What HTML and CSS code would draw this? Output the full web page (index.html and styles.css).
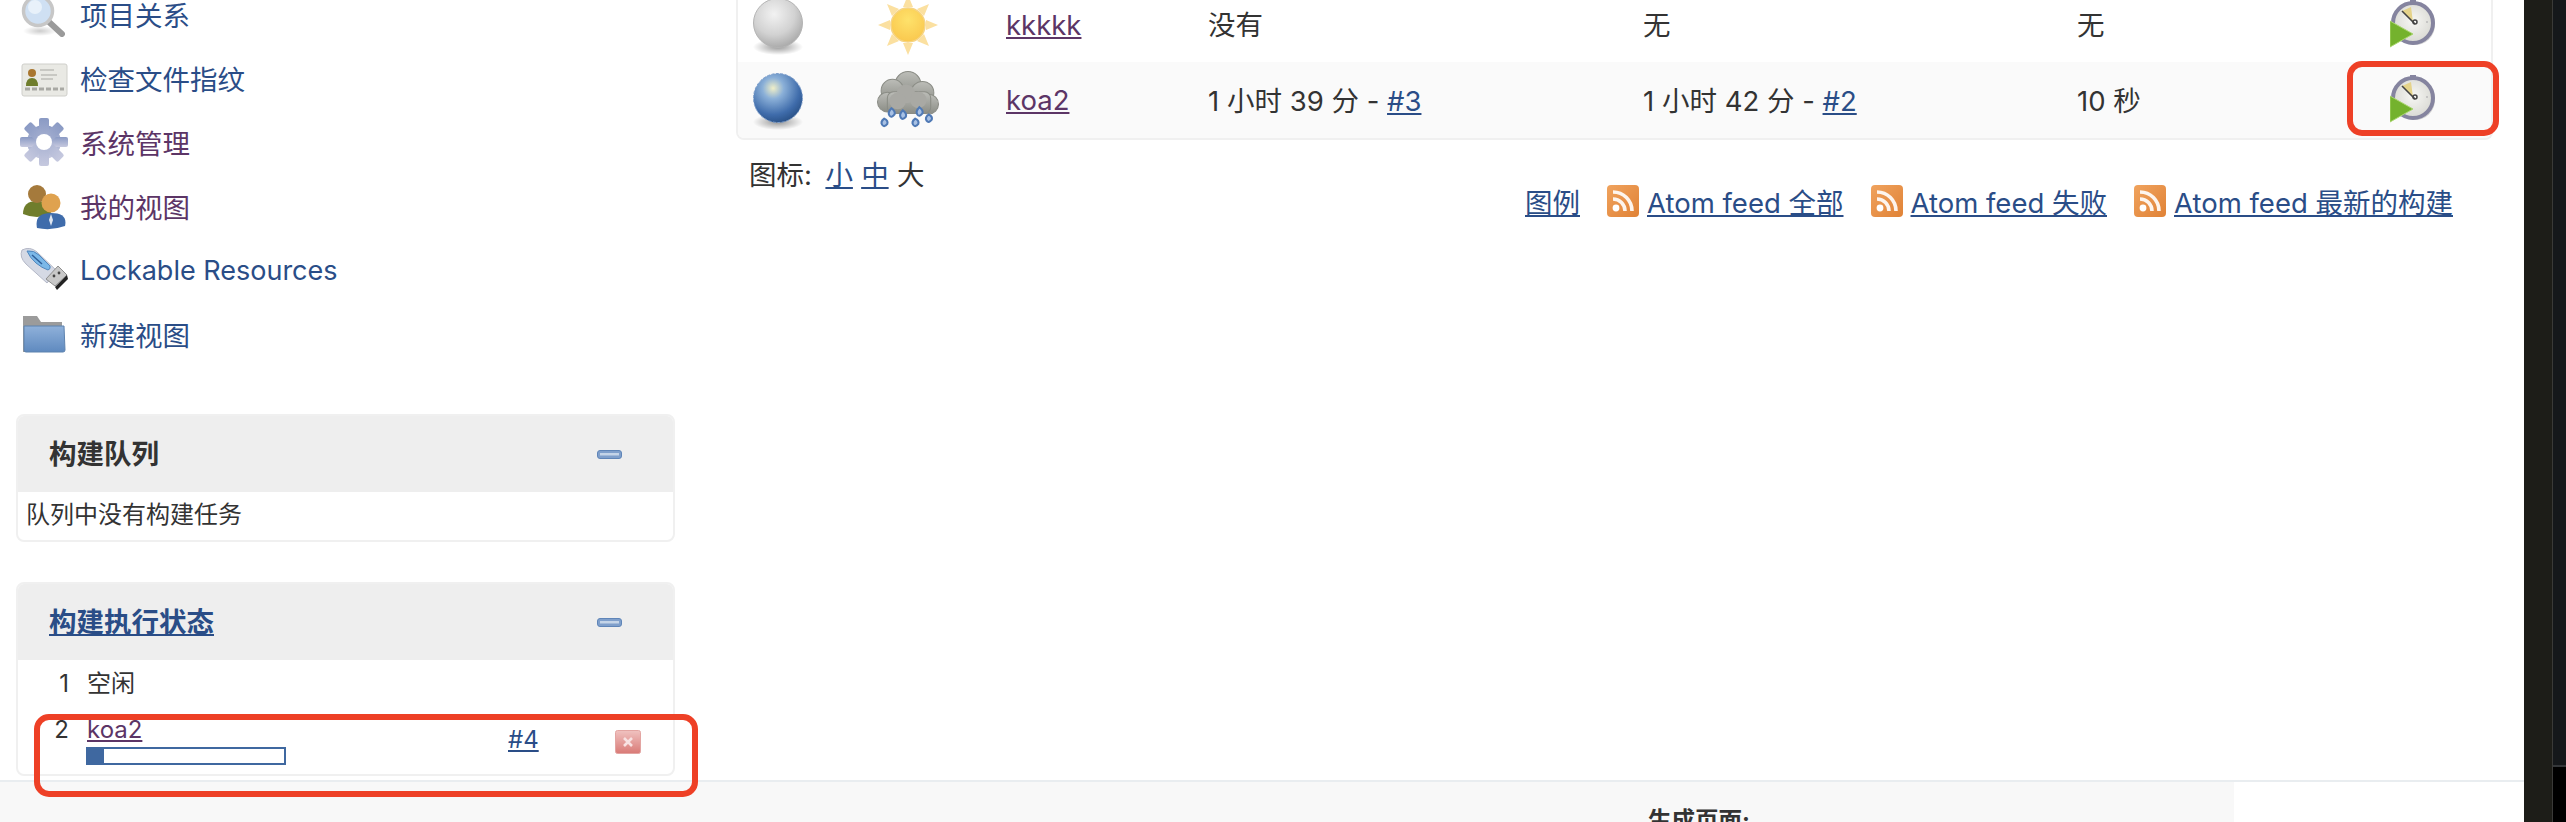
FILE: index.html
```html
<!DOCTYPE html>
<html lang="zh-CN">
<head>
<meta charset="utf-8">
<title>Jenkins</title>
<link rel="stylesheet" href="styles.css">
</head>
<body>
<svg class="defs" width="0" height="0" aria-hidden="true">
  <defs>
    <radialGradient id="gGray" cx="42%" cy="32%" r="70%"><stop offset="0" stop-color="#f2f2f2"/><stop offset=".6" stop-color="#d2d2d2"/><stop offset="1" stop-color="#a9a9a9"/></radialGradient>
    <radialGradient id="gBlue" cx="40%" cy="30%" r="72%"><stop offset="0" stop-color="#f0efc8"/><stop offset=".3" stop-color="#8bb0d8"/><stop offset=".75" stop-color="#3f6cab"/><stop offset="1" stop-color="#2a5288"/></radialGradient>
    <radialGradient id="gShadow"><stop offset="0" stop-color="#000" stop-opacity=".4"/><stop offset="1" stop-color="#000" stop-opacity="0"/></radialGradient>
    <radialGradient id="gSun" cx="50%" cy="35%" r="65%"><stop offset="0" stop-color="#fee26b"/><stop offset="1" stop-color="#fac84e"/></radialGradient>
    <linearGradient id="gCloud" x1="0" y1="0" x2="0" y2="1"><stop offset="0" stop-color="#bcbdb8"/><stop offset="1" stop-color="#8b8d86"/></linearGradient>
    <linearGradient id="gGear" x1="0" y1="0" x2="0" y2="1"><stop offset="0" stop-color="#8a9ac4"/><stop offset="1" stop-color="#c6c9df"/></linearGradient>
    <linearGradient id="gFolder" x1="0" y1="0" x2="0" y2="1"><stop offset="0" stop-color="#8fb1da"/><stop offset="1" stop-color="#5f8abf"/></linearGradient>
    <linearGradient id="gRss" x1="0" y1="0" x2="1" y2="1"><stop offset="0" stop-color="#f0a35e"/><stop offset="1" stop-color="#e08236"/></linearGradient>
    <linearGradient id="gCancel" x1="0" y1="0" x2="0" y2="1"><stop offset="0" stop-color="#f0c2c0"/><stop offset="1" stop-color="#d97a76"/></linearGradient>
    <radialGradient id="gFace" cx="50%" cy="45%" r="60%"><stop offset="0" stop-color="#f7f7f4"/><stop offset="1" stop-color="#d6d6d0"/></radialGradient>

    <symbol id="iBallGray" viewBox="0 0 52 60">
      <ellipse cx="26" cy="49" rx="25" ry="8" fill="url(#gShadow)"/>
      <circle cx="26" cy="25" r="24.5" fill="url(#gGray)" stroke="#b4b4b4"/>
    </symbol>
    <symbol id="iBallBlue" viewBox="0 0 52 60">
      <ellipse cx="26" cy="49" rx="25" ry="8" fill="url(#gShadow)"/>
      <circle cx="26" cy="25" r="24.5" fill="url(#gBlue)" stroke="#7f9fcb" stroke-dasharray="3 1.5"/>
    </symbol>
    <symbol id="iSun" viewBox="0 0 60 60">
      <g fill="#fbe0a0">
        <path d="M30 0l5 12h-10z"/>
        <path d="M30 60l5-12h-10z"/>
        <path d="M0 30l12-5v10z"/>
        <path d="M60 30l-12-5v10z"/>
        <path d="M9 9l12 5-7 7z"/>
        <path d="M51 9l-12 5 7 7z"/>
        <path d="M9 51l12-5-7-7z"/>
        <path d="M51 51l-12-5 7-7z"/>
      </g>
      <circle cx="30" cy="30" r="17" fill="url(#gSun)" stroke="#f6d483" stroke-width="1.5"/>
    </symbol>
    <symbol id="iCloud" viewBox="0 0 60 56">
      <g fill="url(#gCloud)" stroke="#8a8c85">
        <circle cx="30" cy="13" r="12.5"/>
        <circle cx="15" cy="19" r="11"/>
        <circle cx="44" cy="21" r="11"/>
        <circle cx="10" cy="30" r="9.5"/>
        <circle cx="50" cy="32" r="9.5"/>
        <rect x="10" y="20" width="42" height="21" rx="6"/>
      </g>
      <g fill="#a9a9a4">
        <circle cx="28" cy="22" r="9"/><circle cx="40" cy="28" r="8"/><circle cx="20" cy="29" r="8"/>
      </g>
      <g fill="#a8c1e4" stroke="#4f79b5" stroke-width="2">
        <path d="M14 36q-4 4-2 7t5-1q1-3-3-6z"/>
        <path d="M25 38q-4 4-2 7t5-1q1-3-3-6z"/>
        <path d="M41 35q-4 4-2 7t5-1q1-3-3-6z"/>
        <path d="M7 46q-4 3-2 6t5-1q1-3-3-5z"/>
        <path d="M37 46q-4 3-2 6t5-1q1-3-3-5z"/>
        <path d="M50 42q-4 3-2 6t5-1q1-3-3-5z"/>
      </g>
    </symbol>
    <symbol id="iClock" viewBox="0 0 46 48">
      <circle cx="25" cy="25" r="20" fill="#777" opacity=".3"/>
      <circle cx="23" cy="23" r="20" fill="url(#gFace)" stroke="#85849f" stroke-width="4"/>
      <rect x="20" y="0" width="6" height="4" fill="#85849f"/>
      <path d="M23 22L21 7l-9 4z" fill="#e5d38a"/>
      <path d="M12 11l13 13" stroke="#444" stroke-width="1.6" fill="none"/>
      <circle cx="25" cy="22" r="2" fill="none" stroke="#444" stroke-width="1.5"/>
      <circle cx="37" cy="22" r="1" fill="#bbb"/>
      <path d="M0 21l23 13L0 47z" fill="#74b22d" stroke="#a9d66f"/>
    </symbol>
    <symbol id="iSearch" viewBox="0 0 48 48">
      <ellipse cx="20" cy="41" rx="17" ry="5" fill="url(#gShadow)" opacity=".5"/>
      <path d="M29 32l13 12" stroke="#9a9a9a" stroke-width="6" stroke-linecap="round"/>
      <circle cx="18" cy="21" r="14.5" fill="#cfe0f3" stroke="#c7c7c7" stroke-width="3.5"/>
      <circle cx="15" cy="17" r="7" fill="#e8f1fa"/>
    </symbol>
    <symbol id="iCard" viewBox="0 0 48 48">
      <rect x="2" y="10" width="45" height="32" rx="2" fill="#e9e9e4" stroke="#cfcfca"/>
      <circle cx="12" cy="19" r="4" fill="#a9762f"/>
      <path d="M6 32q0-8 6-8t6 8z" fill="#6f7d2c"/>
      <path d="M20 16h14M21 21h16M21 25h12" stroke="#bdbdb8" stroke-width="1.5"/>
      <path d="M5 35h39" stroke="#a9a9a4" stroke-width="3" stroke-dasharray="5 2"/>
    </symbol>
    <symbol id="iGear" viewBox="0 0 48 48">
      <g fill="url(#gGear)">
        <circle cx="24" cy="24" r="17"/>
        <rect x="19" y="0" width="10" height="48" rx="2"/>
        <rect x="0" y="19" width="48" height="10" rx="2"/>
        <rect x="19" y="0" width="10" height="48" rx="2" transform="rotate(45 24 24)"/>
        <rect x="19" y="0" width="10" height="48" rx="2" transform="rotate(-45 24 24)"/>
      </g>
      <circle cx="24" cy="24" r="8" fill="#fff"/>
    </symbol>
    <symbol id="iUsers" viewBox="0 0 48 48">
      <path d="M3 32q0-13 14-13t14 13q-14 6-28 0z" fill="#6f7d2c"/>
      <circle cx="17" cy="12" r="9" fill="#a57a3c"/>
      <path d="M17 46q-3-15 14-15t14 13q-14 5-28 2z" fill="#3f6cab"/>
      <path d="M31 32l-2 6 2 6 2-6z" fill="#dfe6f0"/>
      <circle cx="31" cy="21" r="9.5" fill="#dfa24f"/>
    </symbol>
    <symbol id="iUsb" viewBox="0 0 48 48">
      <path d="M2 4Q10 0 17 6L37 25 27 37 6 18Q-1 11 2 4z" fill="#d5d9e4" stroke="#b3b7c6"/>
      <path d="M7 5q7-1 12 4l11 11q1 3-2 4Q22 22 16 17T7 5z" fill="#7bb8e8" stroke="#4f86bd"/>
      <path d="M12 9l10 9" stroke="#2f5f99" stroke-width="1.5"/>
      <path d="M26 33l12-13 9 9-12 11z" fill="#c8c8c8" stroke="#8f8f8f"/>
      <path d="M35 41l12-12 1 4-11 11z" fill="#222"/>
      <circle cx="34" cy="30" r="1.4" fill="#444"/><circle cx="39" cy="27" r="1.4" fill="#444"/>
    </symbol>
    <symbol id="iFolder" viewBox="0 0 48 48">
      <path d="M3 6h14l4 6h21v30H3z" fill="#9b9b9b"/>
      <path d="M4 16h40l1 24q0 2-2 2H6q-2 0-2-2z" fill="url(#gFolder)" stroke="#5d82ae"/>
    </symbol>
    <symbol id="iRss" viewBox="0 0 32 32">
      <rect width="32" height="32" rx="4" fill="url(#gRss)"/>
      <circle cx="9" cy="23" r="3.4" fill="#fff"/>
      <path d="M6 14a12 12 0 0 1 12 12M6 7a19 19 0 0 1 19 19" fill="none" stroke="#fff" stroke-width="3.6" opacity=".9"/>
    </symbol>
    <symbol id="iMinus" viewBox="0 0 25 9">
      <rect x=".5" y=".5" width="24" height="8" rx="2.5" fill="#7f9fcb" stroke="#5f85b8"/>
      <rect x="3" y="3" width="19" height="2.5" fill="#c4d4e8"/>
    </symbol>
    <symbol id="iCancel" viewBox="0 0 26 24">
      <rect x=".5" y=".5" width="25" height="23" rx="2" fill="url(#gCancel)" stroke="#e3a5a2"/>
      <path d="M9 8l8 8M17 8l-8 8" stroke="#f8e2e2" stroke-width="2.6"/>
    </symbol>
  </defs>
</svg>

<div class="app">
  <div class="page">
    <div class="columns">
      <aside class="sidebar">
        <nav class="tasks">
          <a class="task" href="#"><svg class="task-icon"><use href="#iSearch"/></svg><span>项目关系</span></a>
          <a class="task" href="#"><svg class="task-icon"><use href="#iCard"/></svg><span>检查文件指纹</span></a>
          <a class="task visited" href="#"><svg class="task-icon"><use href="#iGear"/></svg><span>系统管理</span></a>
          <a class="task visited" href="#"><svg class="task-icon"><use href="#iUsers"/></svg><span>我的视图</span></a>
          <a class="task" href="#"><svg class="task-icon"><use href="#iUsb"/></svg><span class="latin">Lockable Resources</span></a>
          <a class="task" href="#"><svg class="task-icon"><use href="#iFolder"/></svg><span>新建视图</span></a>
        </nav>

        <section class="pane queue">
          <header class="pane-head"><span class="pane-title">构建队列</span><svg class="minus"><use href="#iMinus"/></svg></header>
          <div class="pane-body queue-body">队列中没有构建任务</div>
        </section>

        <section class="pane executors">
          <header class="pane-head"><a class="pane-title pane-link" href="#">构建执行状态</a><svg class="minus"><use href="#iMinus"/></svg></header>
          <div class="pane-body">
            <div class="exec idle"><span class="exec-num">1</span><span class="exec-name">空闲</span></div>
            <div class="exec busy">
              <span class="exec-num">2</span>
              <div class="exec-name">
                <a class="visited-link" href="#">koa2</a>
                <div class="progress"><div class="progress-fill"></div></div>
              </div>
              <a class="exec-build" href="#">#4</a>
              <svg class="cancel"><use href="#iCancel"/></svg>
            </div>
          </div>
        </section>
      </aside>

      <main class="main">
        <div class="jobs">
          <div class="job">
            <span class="cell-icon"><svg class="ball"><use href="#iBallGray"/></svg></span>
            <span class="cell-icon"><svg class="weather"><use href="#iSun"/></svg></span>
            <a class="visited-link job-name" href="#">kkkkk</a>
            <span class="cell-text">没有</span>
            <span class="cell-text">无</span>
            <span class="cell-text">无</span>
            <span class="cell-icon"><svg class="clock"><use href="#iClock"/></svg></span>
          </div>
          <div class="job alt">
            <span class="cell-icon"><svg class="ball"><use href="#iBallBlue"/></svg></span>
            <span class="cell-icon"><svg class="weather cloud"><use href="#iCloud"/></svg></span>
            <a class="visited-link job-name" href="#">koa2</a>
            <span class="cell-text">1 小时 39 分 - <a href="#">#3</a></span>
            <span class="cell-text">1 小时 42 分 - <a href="#">#2</a></span>
            <span class="cell-text">10 秒</span>
            <span class="cell-icon"><svg class="clock"><use href="#iClock"/></svg></span>
          </div>
        </div>
        <div class="sizes"><span class="sizes-label">图标:&nbsp;</span> <a href="#">小</a> <a href="#">中</a> 大</div>
        <div class="feeds">
          <a href="#">图例</a>
          <span class="feed"><svg class="rss"><use href="#iRss"/></svg><a href="#">Atom feed 全部</a></span>
          <span class="feed"><svg class="rss"><use href="#iRss"/></svg><a href="#">Atom feed 失败</a></span>
          <span class="feed"><svg class="rss"><use href="#iRss"/></svg><a href="#">Atom feed 最新的构建</a></span>
        </div>
      </main>
    </div>
    <footer class="footer"><b class="footer-text">生成页面:</b></footer>

    <div class="mark mark-clock"></div>
    <div class="mark mark-exec"></div>
  </div>
  <div class="edge">
    <div class="edge-a"></div>
    <div class="edge-b"></div>
  </div>
</div>
</body>
</html>
```

FILE: styles.css
```css
* { box-sizing: border-box; }
html, body { margin: 0; height: 100%; overflow: hidden; background: #fff; }
body { font-family: Inter, "Noto Sans CJK SC", sans-serif; font-size: 27.5px; color: #333; }
a { color: #2a4d87; }
.defs { position: absolute; }

.app { display: flex; width: 2566px; height: 822px; overflow: hidden; }
.page { position: relative; width: 2524px; height: 822px; display: flex; flex-direction: column; overflow: hidden; }
.columns { display: flex; height: 780px; flex: none; }

/* sidebar */
.sidebar { width: 736px; flex: none; padding: 0 0 0 16px; margin-top: -18px; }
.tasks { display: flex; flex-direction: column; padding-left: 4px; }
.task { display: flex; align-items: center; gap: 12px; height: 64px; text-decoration: none; color: #2a4d87; }
.task.visited { color: #5c3566; }
.task-icon { width: 48px; height: 48px; flex: none; overflow: visible; filter: blur(.7px); }
.latin { font-size: 27px; }

.pane { width: 659px; border: 2px solid #f0f0f0; border-radius: 8px; background: #fff; overflow: hidden; }
.queue { margin-top: 48px; height: 128px; }
.executors { margin-top: 40px; height: 194px; }
.pane-head { height: 76px; background: #eee; display: flex; align-items: center; justify-content: space-between; padding: 0 51px 5px 31px; }
.pane-title { font-weight: 700; font-size: 27.5px; color: #333; }
.pane-link { color: #2a4d87; }
.minus { width: 25px; height: 9px; margin-top: 5px; }
.pane-body { font-size: 24px; }
.queue-body { padding: 6px 8px; line-height: 34px; }

.exec { display: grid; grid-template-columns: 51px 439px 107px 26px; column-gap: 0; padding-left: 0; }
.idle { height: 47px; align-items: center; }
.busy { height: 67px; align-items: start; }
.exec-num { text-align: right; }
.exec-name { padding-left: 18px; line-height: 34px; }
.idle .exec-name, .idle .exec-num { line-height: 44px; }
.busy .exec-num { line-height: 34px; margin-top: 6px; }
.busy .exec-name { grid-column: 2; padding-top: 6px; }
.busy .exec-name a { display: inline-block; line-height: 30px; }
.exec-build { margin-top: 16px; line-height: 34px; justify-self: start; }
.cancel { width: 26px; height: 24px; margin-top: 23px; filter: blur(.5px); }
.progress { width: 200px; height: 18px; border: 2px solid #3f68a0; margin-top: 0; margin-left: -1px; background: #fff; }
.progress-fill { width: 8%; height: 100%; background: #3f68a0; }
.visited-link { color: #5c3566; }

/* main */
.main { flex: 1; margin-top: -13px; min-width: 0; }
.jobs { width: 1757px; border: 2px solid #f0f0f0; border-top: 0; border-radius: 0 0 8px 8px; overflow: hidden; }
.job { display: grid; grid-template-columns: 79px 181px 210px 435px 434px 276px 120px; height: 75px; align-items: center; padding-right: 20px; }
.job.alt { background: #fafafa; height: 76px; }
.job-name { padding-left: 8px; justify-self: start; }
.cell-text { padding-bottom: 3px; }
.cell-icon { display: flex; justify-content: center; }
.ball { width: 52px; height: 60px; margin-top: 6px; filter: blur(.5px); }
.weather { width: 60px; height: 60px; filter: blur(.5px); }
.cloud { width: 62px; height: 58px; }
.clock { width: 46px; height: 48px; margin-top: -2px; filter: blur(.6px); }

.sizes { margin: 18px 0 0 13px; line-height: 34px; word-spacing: .5px; }
.sizes-label { margin-right: -3px; }
.feeds { display: flex; align-items: center; justify-content: flex-end; gap: 27px; margin-top: -9px; width: 1717px; height: 36px; }
.feed { display: inline-flex; align-items: center; gap: 8px; }
.rss { width: 32px; height: 32px; filter: blur(.4px); }

/* footer */
.footer { flex: 1; width: 2234px; position: relative; background: #f8f8f8; padding: 22px 0 0 1648px; line-height: 34px; }
.page::after { content: ""; position: absolute; left: 0; right: 0; top: 780px; height: 2px; background: #e9edf0; }
.footer-text { font-size: 23.5px; }

/* red annotation rectangles */
.mark { position: absolute; border: 6px solid #ee4026; border-radius: 15px; z-index: 2; }
.mark-clock { left: 2347px; top: 61px; width: 152px; height: 75px; }
.mark-exec { left: 34px; top: 714px; width: 664px; height: 83px; }

/* window edge */
.edge { width: 42px; display: flex; flex: none; background: #1d1d18; }
.edge-a { width: 29px; border-right: 1px solid #3a3a38; background: #1d1d18; }
.edge-b { flex: 1; background: linear-gradient(#15181b 0 765px, #34373a 765px 767px, #000 767px); }
```
